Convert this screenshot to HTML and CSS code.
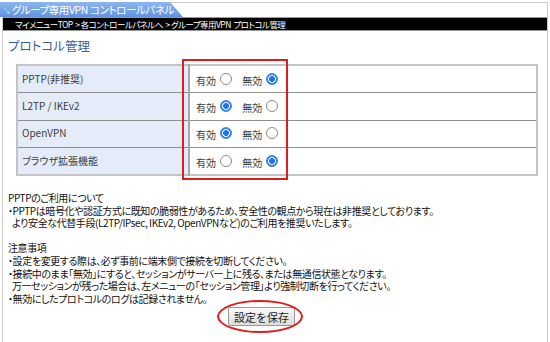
FILE: index.html
```html
<!DOCTYPE html>
<html lang="ja">
<head>
    <meta charset="UTF-8">
    <meta name="viewport" content="width=device-width, initial-scale=1.0">
    <title>プロトコル管理 - グループ専用VPN</title>
    <link rel="stylesheet" href="styles.css">
</head>
<body>
    <div class="window">
        <div class="titlebar">
            <div class="tab"><span class="arrow">&#8600;</span>グループ専用VPN コントロールパネル</div>
        </div>
        <div class="crumbs">マイメニューTOP &nbsp;&gt;&nbsp;各コントロールパネルへ &nbsp;&gt;&nbsp;グループ専用VPN &nbsp;プロトコル管理</div>

        <div class="content">
            <h1>プロトコル管理</h1>

            <div class="table-wrap">
                <table class="protocols">
                    <tr>
                        <th>PPTP(非推奨)</th>
                        <td>
                            <label>有効 <input type="radio" name="pptp" value="on"></label>
                            <label>無効 <input type="radio" name="pptp" value="off" checked></label>
                        </td>
                    </tr>
                    <tr>
                        <th>L2TP / IKEv2</th>
                        <td>
                            <label>有効 <input type="radio" name="l2tp" value="on" checked></label>
                            <label>無効 <input type="radio" name="l2tp" value="off"></label>
                        </td>
                    </tr>
                    <tr>
                        <th>OpenVPN</th>
                        <td>
                            <label>有効 <input type="radio" name="openvpn" value="on" checked></label>
                            <label>無効 <input type="radio" name="openvpn" value="off"></label>
                        </td>
                    </tr>
                    <tr>
                        <th>ブラウザ拡張機能</th>
                        <td>
                            <label>有効 <input type="radio" name="browser" value="on"></label>
                            <label>無効 <input type="radio" name="browser" value="off" checked></label>
                        </td>
                    </tr>
                </table>
                <div class="mark-box"></div>
            </div>

            <div class="notes">
                <p>PPTPのご利用について</p>
                <p>・PPTPは暗号化や認証方式に既知の脆弱性があるため、安全性の観点から現在は非推奨としております。</p>
                <p class="indent">より安全な代替手段(L2TP/IPsec, IKEv2, OpenVPNなど)のご利用を推奨いたします。</p>
                <p class="gap">注意事項</p>
                <p>・設定を変更する際は、必ず事前に端末側で接続を切断してください。</p>
                <p>・接続中のまま「無効」にすると、セッションがサーバー上に残る、または無通信状態となります。</p>
                <p class="indent">万一セッションが残った場合は、左メニューの「セッション管理」より強制切断を行ってください。</p>
                <p>・無効にしたプロトコルのログは記録されません。</p>
            </div>

            <div class="actions">
                <span class="save-wrap">
                    <button type="button">設定を保存</button>
                    <span class="mark-ring"></span>
                </span>
            </div>
        </div>
    </div>
</body>
</html>
```

FILE: styles.css
```css
* {
    margin: 0;
    padding: 0;
    box-sizing: border-box;
}

body {
    font-family: "Noto Sans CJK JP", "Noto Sans", sans-serif;
    font-size: 10px;
    color: #222;
    background-color: #fff;
    overflow: hidden;
}

.window {
    margin: 2px 2px 0 2px;
    height: 340px;
    border: 1px solid #ccc;
    border-bottom: none;
}

.titlebar {
    margin-top: -1px;
    height: 15px;
}

.tab {
    margin-left: -3px;
    width: 183px;
    height: 15px;
    padding-left: 3px;
    background: linear-gradient(#8cb6f0, #6193de);
    clip-path: polygon(0 0, 170px 0, 100% 100%, 0 100%);
    color: #fff;
    font-size: 10.5px;
    letter-spacing: -0.4px;
    line-height: 15px;
    white-space: nowrap;
    font-feature-settings: "palt";
}

.arrow {
    color: #bfe9f0;
    font-size: 8px;
    margin-right: 1px;
}

.crumbs {
    height: 14px;
    background-color: #000;
    border-top: 1px solid #999;
    border-bottom: 1px solid #999;
    color: #fff;
    font-size: 8.5px;
    letter-spacing: -0.55px;
    line-height: 12px;
    padding-left: 12px;
    white-space: nowrap;
    font-feature-settings: "palt";
}

.content {
    padding-left: 5px;
}

h1 {
    margin-top: 7px;
    font-size: 12.5px;
    font-weight: normal;
    line-height: 16px;
    color: #3b5fa0;
    font-feature-settings: "palt";
}

.table-wrap {
    position: relative;
    margin: 10px 9px 0 8px;
}

.protocols {
    width: 100%;
    border-collapse: collapse;
    border: 2px solid #c4c4c4;
    font-size: 10px;
}

.protocols tr {
    height: 27.5px;
}

.protocols th,
.protocols td {
    border-bottom: 1px solid #8e8e8e;
    font-weight: normal;
    text-align: left;
    vertical-align: middle;
    color: #3c3c3c;
    font-feature-settings: "palt";
}

.protocols th {
    width: 172px;
    padding-left: 4px;
    padding-bottom: 2px;
    background-color: #e3ecf8;
    border-right: 2px solid #a9a9a9;
}

.protocols td {
    padding-left: 6px;
    padding-top: 2px;
}

.protocols label {
    display: inline-flex;
    align-items: center;
    gap: 4px;
    margin-right: 8px;
}

.protocols input[type="radio"] {
    appearance: none;
    width: 12px;
    height: 12px;
    border-radius: 50%;
    border: 1px solid #8a8a8a;
    background-color: #fff;
    margin-top: -3px;
}

.protocols input[type="radio"]:checked {
    border: 1px solid #4a8df0;
    background: radial-gradient(circle, #1a73e8 0 2.6px, #fff 3.2px 3.6px, #2a7ff0 4.2px);
}

.mark-box {
    position: absolute;
    left: 166px;
    top: -5px;
    width: 106px;
    height: 121px;
    border: 2px solid #e31b1b;
}

.notes {
    margin-top: 16px;
    line-height: 12.6px;
    color: #111;
    letter-spacing: -0.4px;
    white-space: nowrap;
    font-feature-settings: "palt";
}

.notes .indent {
    padding-left: 4px;
}

.notes .gap {
    margin-top: 12.6px;
}

.actions {
    margin-top: 2px;
    padding-left: 220px;
}

.save-wrap {
    position: relative;
    display: inline-block;
}

button {
    display: block;
    height: 19px;
    padding: 0 5px;
    font-family: "Noto Sans CJK JP", sans-serif;
    font-size: 11px;
    color: #222;
    background: linear-gradient(#fafafa, #dcdcdc);
    border: 1px solid #9a9a9a;
    border-radius: 2px;
}

.mark-ring {
    position: absolute;
    left: -11px;
    top: -7px;
    width: 86px;
    height: 33px;
    border: 2px solid #e31b1b;
    border-radius: 50%;
}
```
